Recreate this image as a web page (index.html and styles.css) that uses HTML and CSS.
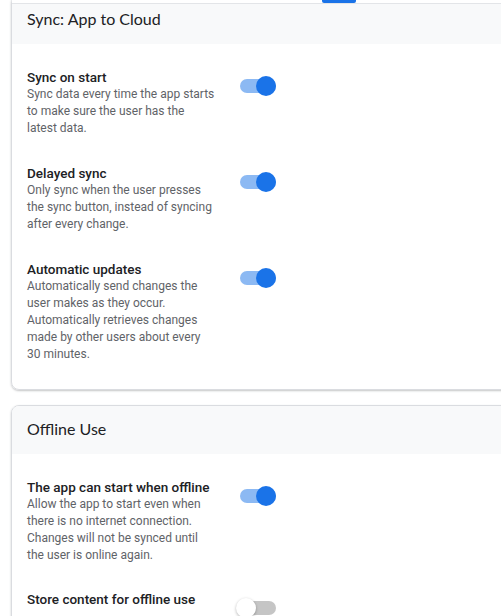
FILE: index.html
```html
<!DOCTYPE html>
<html lang="en">

<head>
  <meta charset="UTF-8">
  <title>Sync settings</title>
  <link rel="stylesheet" href="styles.css">
</head>

<body>
  <!-- sticky tab strip that the page scrolled under -->
  <div class="tabs"><span class="tab-ink"></span></div>

  <main class="page">
    <section class="card card-first">
      <h2 class="card-head">Sync: App to Cloud</h2>
      <div class="card-body">
        <div class="setting">
          <div class="setting-text">
            <div class="setting-title">Sync on start</div>
            <p class="setting-desc">Sync data every time the app starts to make sure the user has the latest data.</p>
          </div>
          <span class="switch on"><span class="switch-track"></span><span class="switch-thumb"></span></span>
        </div>

        <div class="setting">
          <div class="setting-text">
            <div class="setting-title">Delayed sync</div>
            <p class="setting-desc">Only sync when the user presses the sync button, instead of syncing after every change.</p>
          </div>
          <span class="switch on"><span class="switch-track"></span><span class="switch-thumb"></span></span>
        </div>

        <div class="setting">
          <div class="setting-text">
            <div class="setting-title">Automatic updates</div>
            <p class="setting-desc">Automatically send changes the user makes as they occur. Automatically retrieves changes made by other users about every 30 minutes.</p>
          </div>
          <span class="switch on"><span class="switch-track"></span><span class="switch-thumb"></span></span>
        </div>
      </div>
    </section>

    <section class="card">
      <h2 class="card-head">Offline Use</h2>
      <div class="card-body">
        <div class="setting">
          <div class="setting-text">
            <div class="setting-title">The app can start when offline</div>
            <p class="setting-desc">Allow the app to start even when there is no internet connection. Changes will not be synced until the user is online again.</p>
          </div>
          <span class="switch on"><span class="switch-track"></span><span class="switch-thumb"></span></span>
        </div>

        <div class="setting">
          <div class="setting-text">
            <div class="setting-title">Store content for offline use</div>
          </div>
          <span class="switch"><span class="switch-track"></span><span class="switch-thumb"></span></span>
        </div>
      </div>
    </section>
  </main>
</body>

</html>
```

FILE: styles.css
```css
html,
body {
  margin: 0;
  overflow: hidden;
  background: #fff;
}

body {
  font-family: Roboto, "Liberation Sans", sans-serif;
  color: #202124;
}

/* tab strip on top of the scrolled content */
.tabs {
  position: fixed;
  top: 0;
  left: 12px;
  right: 0;
  height: 3px;
  background: #fff;
  border-bottom: 1px solid #e3e5e8;
  z-index: 2;
}

.tab-ink {
  display: block;
  margin-left: 310px;
  width: 34px;
  height: 3px;
  background: #1a73e8;
  border-radius: 0 0 2px 2px;
}

.page {
  padding-left: 11px;
  margin-right: -40px;
}

.card {
  border: 1px solid #dadce0;
  border-radius: 8px;
  box-shadow: 0 1px 2px rgba(60, 64, 67, .3);
  margin-bottom: 15px;
  overflow: hidden;
}

.card-first {
  margin-top: -5px;
}

.card-head {
  margin: 0;
  padding: 11px 15px 13px;
  background: #f8f9fa;
  font-family: Lato, "Open Sans", sans-serif;
  font-size: 16px;
  font-weight: 400;
  line-height: 24px;
  color: #202124;
}

.card-body {
  padding: 24px 15px 26px;
  display: flex;
  flex-direction: column;
  gap: 26px;
}

.setting {
  display: grid;
  grid-template-columns: 189px 36px;
  column-gap: 24px;
  align-items: start;
  min-height: 70px;
}

.setting-title {
  font-size: 13.5px;
  font-weight: 500;
  line-height: 18px;
  white-space: nowrap;
  color: #202124;
}

.setting-desc {
  margin: 0;
  font-size: 12px;
  line-height: 17px;
  color: #5f6368;
}

/* material style switch */
.switch {
  position: relative;
  display: block;
  width: 36px;
  height: 20px;
  margin-top: 8px;
}

.switch-track {
  position: absolute;
  top: 3px;
  left: 0;
  width: 36px;
  height: 14px;
  border-radius: 7px;
  background: #9e9e9e;
  opacity: .6;
}

.switch-thumb {
  position: absolute;
  top: 0;
  left: -4px;
  width: 20px;
  height: 20px;
  border-radius: 50%;
  background: #fff;
  box-shadow: 0 1px 3px rgba(0, 0, 0, .3);
}

.switch.on .switch-track {
  background: #1a73e8;
  opacity: .5;
}

.switch.on .switch-thumb {
  left: 16px;
  background: #1a73e8;
  box-shadow: none;
}
```
